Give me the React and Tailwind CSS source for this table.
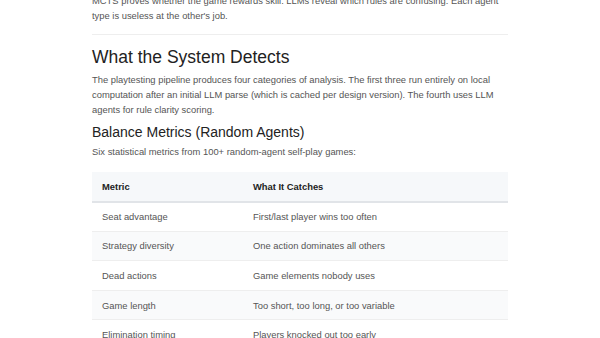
const rows = [
  ["Seat advantage", "First/last player wins too often"],
  ["Strategy diversity", "One action dominates all others"],
  ["Dead actions", "Game elements nobody uses"],
  ["Game length", "Too short, too long, or too variable"],
  ["Elimination timing", "Players knocked out too early"],
];

export default function App() {
  return (
    <div className="h-[338px] overflow-hidden bg-white font-['Liberation_Sans',Arial,sans-serif]">
      <div className="w-[416px] mx-auto">
        <p className="mt-[-7.5px] text-[9.4px] leading-[15px] text-[#555]">
          MCTS proves whether the game rewards skill. LLMs reveal which rules are confusing. Each agent type is useless at the other's job.
        </p>
        <hr className="mt-[11px] border-0 border-t border-[#eeeeee]" />
        <h2 className="mt-[11px] text-[17.5px] leading-[22px] text-[#222]">What the System Detects</h2>
        <p className="mt-[4px] text-[9.4px] leading-[15px] text-[#555]">
          The playtesting pipeline produces four categories of analysis. The first three run entirely on local computation after an initial LLM parse (which is cached per design version). The fourth uses LLM agents for rule clarity scoring.
        </p>
        <h3 className="mt-[6px] text-[14px] leading-[18px] text-[#222]">Balance Metrics (Random Agents)</h3>
        <p className="mt-[3.5px] text-[9.4px] leading-[15px] text-[#555]">
          Six statistical metrics from 100+ random-agent self-play games:
        </p>
        <table className="mt-[12.5px] w-full border-collapse text-[9.4px] leading-[15px]">
          <thead>
            <tr className="bg-[#f6f8fa] border-b-2 border-[#e1e4e8]">
              <th className="w-[151px] h-[30px] px-[10px] text-left font-bold text-[#222]">Metric</th>
              <th className="h-[30px] px-[10px] text-left font-bold text-[#222]">What It Catches</th>
            </tr>
          </thead>
          <tbody>
            {rows.map(([metric, catches], i) => (
              <tr key={metric} className={`border-b border-[#eeeeee] ${i % 2 === 1 ? "bg-[#f9fafb]" : "bg-white"}`}>
                <td className="h-[29.6px] px-[10px] text-[#555]">{metric}</td>
                <td className="h-[29.6px] px-[10px] text-[#555]">{catches}</td>
              </tr>
            ))}
          </tbody>
        </table>
      </div>
    </div>
  );
}
